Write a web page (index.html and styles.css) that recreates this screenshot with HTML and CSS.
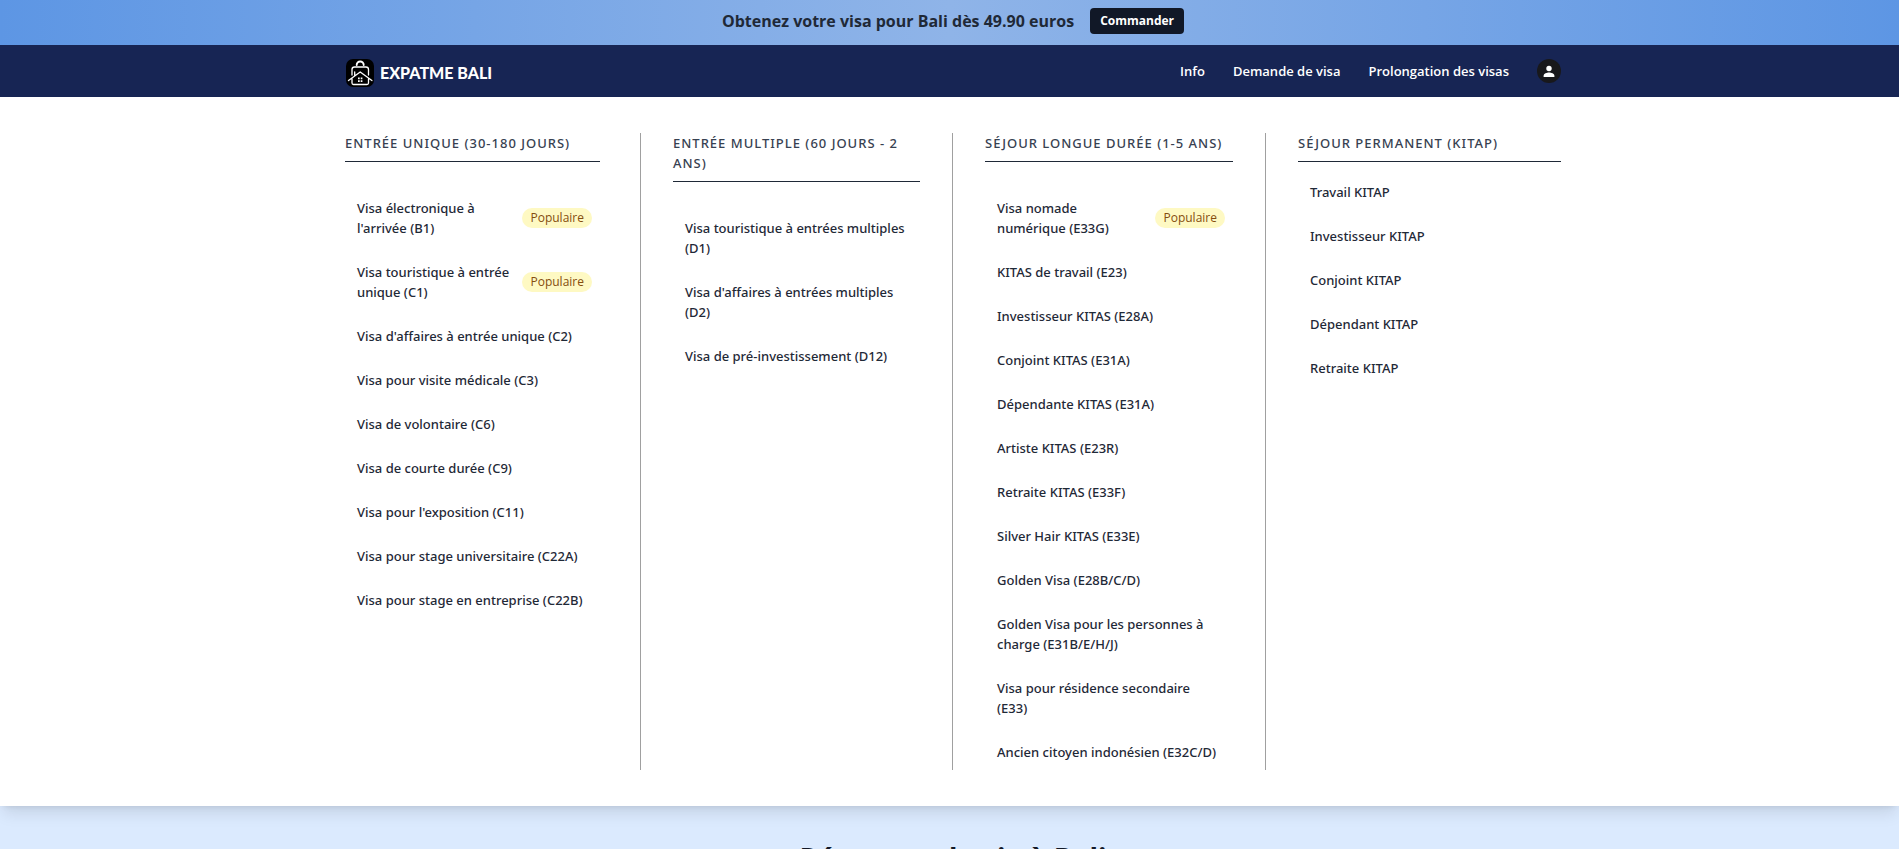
FILE: index.html
```
<!DOCTYPE html>
<html lang="fr">
<head>
<meta charset="utf-8">
<title>ExpatMe Bali</title>
<link rel="stylesheet" href="styles.css">
</head>
<body>
<div class="promo">
  <p class="promo-text">Obtenez votre visa pour Bali dès 49.90 euros</p>
  <button class="promo-button" type="button">Commander</button>
</div>
<header class="topbar">
  <div class="container topbar-inner">
    <a class="brand" href="#">
      <svg class="brand-mark" viewBox="0 0 28 28" aria-hidden="true">
        <rect width="28" height="28" rx="7" fill="#000"/>
        <g fill="none" stroke="#fff" stroke-width="1.300" stroke-linecap="round" stroke-linejoin="round">
          <path d="M10.700 6a3.500 3.500 0 0 1 7 0" stroke-width="1.900"/>
          <path d="M6 16v-5.500a2.500 2.500 0 0 1 2.500-2.500h11.500a2.500 2.500 0 0 1 2.500 2.500v5.500"/>
          <path d="M2.500 21.500 14.200 13l11.700 8.500M6 20v4a1.500 1.500 0 0 0 1.500 1.500h13.500a1.500 1.500 0 0 0 1.500-1.500v-4M8.700 13v3.500"/>
        </g>
        <path d="M12 18.500h1.700v1.700H12zM14.700 18.500h1.700v1.700h-1.700zM12 21.200h1.700v1.700H12zM14.700 21.200h1.700v1.700h-1.700z" fill="#fff"/>
      </svg>
      <span class="brand-name">EXPATME BALI</span>
    </a>
    <nav class="main-nav">
      <a href="#">Info</a>
      <a href="#">Demande de visa</a>
      <a href="#">Prolongation des visas</a>
      <button class="account" type="button" aria-label="Compte">
        <svg viewBox="0 0 24 24" aria-hidden="true"><circle cx="12" cy="12" r="12" fill="#18181b"/><circle cx="12" cy="9.500" r="2.700" fill="#fff"/><path d="M6.600 18v-1.300c0-2 3.300-3.100 5.400-3.100s5.400 1.100 5.400 3.100V18z" fill="#fff"/></svg>
      </button>
    </nav>
  </div>
</header>
<div class="mega">
  <div class="container mega-grid">
    <section class="column">
      <h2>Entrée unique (30-180 jours)</h2>
      <ul class="offset">
        <li><a class="tagged" href="#">Visa électronique à l'arrivée (B1)<span class="badge">Populaire</span></a></li>
        <li><a class="tagged" href="#">Visa touristique à entrée unique (C1)<span class="badge">Populaire</span></a></li>
        <li><a href="#">Visa d'affaires à entrée unique (C2)</a></li>
        <li><a href="#">Visa pour visite médicale (C3)</a></li>
        <li><a href="#">Visa de volontaire (C6)</a></li>
        <li><a href="#">Visa de courte durée (C9)</a></li>
        <li><a href="#">Visa pour l'exposition (C11)</a></li>
        <li><a href="#">Visa pour stage universitaire (C22A)</a></li>
        <li><a href="#">Visa pour stage en entreprise (C22B)</a></li>
      </ul>
    </section>
    <section class="column">
      <h2>Entrée multiple (60 jours - 2 ans)</h2>
      <ul class="offset">
        <li><a href="#">Visa touristique à entrées multiples (D1)</a></li>
        <li><a href="#">Visa d'affaires à entrées multiples (D2)</a></li>
        <li><a href="#">Visa de pré-investissement (D12)</a></li>
      </ul>
    </section>
    <section class="column">
      <h2>Séjour longue durée (1-5 ans)</h2>
      <ul class="offset">
        <li><a class="tagged" href="#">Visa nomade numérique (E33G)<span class="badge">Populaire</span></a></li>
        <li><a href="#">KITAS de travail (E23)</a></li>
        <li><a href="#">Investisseur KITAS (E28A)</a></li>
        <li><a href="#">Conjoint KITAS (E31A)</a></li>
        <li><a href="#">Dépendante KITAS (E31A)</a></li>
        <li><a href="#">Artiste KITAS (E23R)</a></li>
        <li><a href="#">Retraite KITAS (E33F)</a></li>
        <li><a href="#">Silver Hair KITAS (E33E)</a></li>
        <li><a href="#">Golden Visa (E28B/C/D)</a></li>
        <li><a href="#">Golden Visa pour les personnes à charge (E31B/E/H/J)</a></li>
        <li><a href="#">Visa pour résidence secondaire (E33)</a></li>
        <li><a href="#">Ancien citoyen indonésien (E32C/D)</a></li>
      </ul>
    </section>
    <section class="column">
      <h2>Séjour permanent (KITAP)</h2>
      <ul>
        <li><a href="#">Travail KITAP</a></li>
        <li><a href="#">Investisseur KITAP</a></li>
        <li><a href="#">Conjoint KITAP</a></li>
        <li><a href="#">Dépendant KITAP</a></li>
        <li><a href="#">Retraite KITAP</a></li>
      </ul>
    </section>
  </div>
</div>
<main class="page">
  <h1>Réponses de vie à Bali</h1>
</main>
</body>
</html>
```
FILE: styles.css
```
* { box-sizing: border-box; }
html { height: 100%; }
body {
  margin: 0;
  height: 100%;
  overflow: hidden;
  background: #dbeafe;
  color: #1f2937;
  font-family: "Open Sans", "Noto Sans", sans-serif;
  font-size: 13px;
  line-height: 20px;
}
a { color: inherit; text-decoration: none; }
button { border: 0; padding: 0; font: inherit; cursor: pointer; }
h1, h2, p, ul { margin: 0; padding: 0; }
ul { list-style: none; }

.container {
  max-width: 1287px;
  margin: 0 auto;
  padding: 0 32px 0 39px;
}

.promo {
  display: flex;
  align-items: center;
  justify-content: center;
  gap: 16px;
  min-height: 45px;
  padding: 0 0 3px 7px;
  background: linear-gradient(90deg, #5d96e4, #8fb4e8 50%, #5d96e4);
}
.promo-text { font-size: 16px; line-height: 24px; font-weight: 700; }
.promo-button {
  height: 26px;
  padding: 0 10px;
  border-radius: 4px;
  background: #111827;
  color: #fff;
  font-size: 12px;
  font-weight: 700;
}

.topbar { background: #172554; color: #fff; }
.topbar-inner {
  display: flex;
  align-items: center;
  justify-content: space-between;
  min-height: 52px;
}
.brand { display: flex; align-items: center; gap: 6px; padding: 3px 0 0 1px; }
.brand-mark { width: 28px; height: 28px; }
.brand-name { font-family: Lato, sans-serif; font-size: 16px; font-weight: 900; }
.main-nav { display: flex; align-items: center; gap: 28px; font-weight: 600; }
.account { width: 24px; height: 24px; border-radius: 50%; background: none; }
.account svg { display: block; width: 24px; height: 24px; }

.mega {
  position: relative;
  padding: 36px 0;
  background: #fff;
  box-shadow: 0 10px 15px -3px rgba(0, 0, 0, 0.1), 0 4px 6px -4px rgba(0, 0, 0, 0.1);
  font-family: "Noto Sans", "Open Sans", sans-serif;
  font-weight: 500;
}
.mega-grid { display: grid; grid-template-columns: 296fr 312fr 313fr 295fr; }
.column { min-width: 0; padding: 0 32px; border-right: 1px solid #a0a0a0; }
.column:first-child { padding: 0 40px 0 0; }
.column:last-child { padding-right: 0; border-right: 0; }
.column h2 {
  padding-bottom: 8px;
  border-bottom: 1px solid #1f2937;
  color: #374151;
  font-size: 13px;
  font-weight: 500;
  letter-spacing: 1px;
  text-transform: uppercase;
}
.column ul { display: grid; gap: 8px; padding-top: 12px; }
.column ul.offset { padding-top: 28px; }
.column li a {
  display: flex;
  align-items: center;
  justify-content: space-between;
  padding: 8px 12px;
}
.column li a.tagged { padding-right: 8px; }
.badge {
  flex: none;
  margin-left: 12px;
  padding: 0 8px;
  border-radius: 10px;
  background: #fef9c3;
  color: #854d0e;
  font-family: "Open Sans", sans-serif;
  font-size: 12px;
}

.page { padding: 34px 0 0 7px; text-align: center; }
.page h1 { color: #111827; font-size: 28px; line-height: 36px; font-weight: 700; }
```
